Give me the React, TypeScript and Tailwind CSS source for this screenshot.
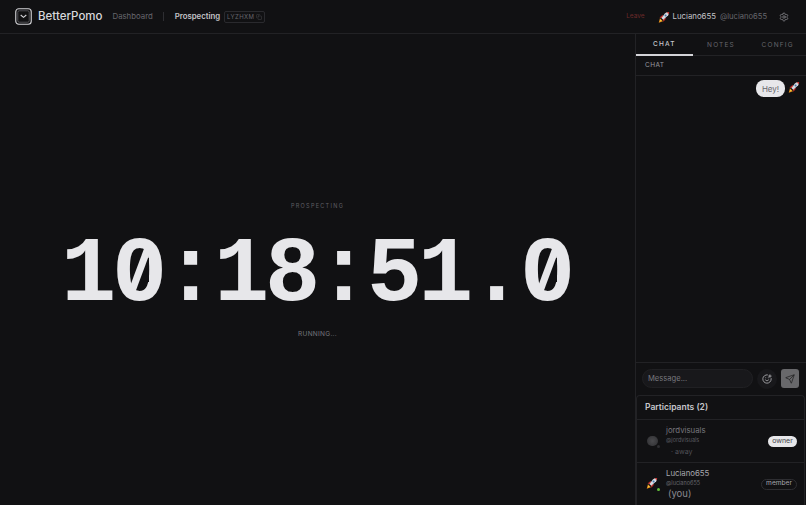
import { Copy, Send, Settings, SmilePlus } from "lucide-react";

const Rocket = ({ size = 14 }: { size?: number }) => (
  <svg width={size} height={size} viewBox="0 0 16 16" className="shrink-0">
    <path d="M1 15.5 L2.6 9.8 L6.6 13.6 Z" fill="#e8901c" />
    <path d="M2.4 14 L3.4 11.2 L5 12.8 Z" fill="#f6dc4c" />
    <path d="M2 8.8 L6.6 5 L6.4 9.8 Z" fill="#c22d29" />
    <path d="M7.4 14.4 L11 9.8 L6.2 10 Z" fill="#c22d29" />
    <path d="M4.6 9.2 L7 11.6 L12.6 6.8 C14.2 5 14.8 3 14.8 1.2 C13 1.2 10.8 1.8 9.2 3.2 Z" fill="#d8dae0" />
    <path d="M11.8 1.8 C12.8 1.4 13.9 1.2 14.8 1.2 C14.8 2.1 14.6 3.2 14.2 4.2 Z" fill="#c22d29" />
    <circle cx="10.1" cy="5.9" r="1.3" fill="#3f78b0" />
  </svg>
);

const SlashedZero = () => (
  <span className="relative inline-block">
    0
    <svg className="absolute left-0 top-0" width="51" height="108" viewBox="0 0 51 108" aria-hidden="true">
      <rect x="19" y="36" width="18" height="24" fill="#111113" />
      <path d="M36 26 L20 69" stroke="#e7e7ea" strokeWidth="7" />
    </svg>
  </span>
);

export default function App() {
  return (
    <div className="h-[505px] w-[806px] overflow-hidden flex flex-col bg-[#111113] font-['Inter','Liberation_Sans',sans-serif] text-[#e4e4e7]">
      <header className="h-[34px] shrink-0 border-b border-[#222225] flex items-center pl-[15px] pr-[17px]">
        <svg width="17" height="17" viewBox="0 0 17 17" fill="none" className="shrink-0">
          <rect x="0.75" y="0.75" width="15.5" height="15.5" rx="3" stroke="#d4d4d8" strokeWidth="1.1" />
          <rect x="2.8" y="2.8" width="11.4" height="11.4" rx="1.5" stroke="#77777c" strokeWidth="0.6" />
          <path d="M5.7 7 L8.5 9.4 L11.3 7" stroke="#d4d4d8" strokeWidth="1.1" />
        </svg>
        <span className="ml-[6px] text-[11.5px] font-medium text-[#d8d8dc]">BetterPomo</span>
        <span className="ml-[10px] text-[7.8px] text-[#66666c]">Dashboard</span>
        <span className="ml-[10px] h-[9px] w-px bg-[#2e2e32]" />
        <span className="ml-[11px] text-[7.8px] font-semibold text-[#c4c4c8]">Prospecting</span>
        <span className="ml-[4px] h-[12px] w-[41px] rounded-[2px] border border-[#2a2a2e] flex items-center justify-center gap-[2px] text-[6px] tracking-[0.4px] text-[#66666c]">
          LYZHXM
          <Copy size={6} strokeWidth={1.5} className="text-[#55555a]" />
        </span>
        <span className="ml-auto text-[6.5px] text-[#6b2a2a]">Leave</span>
        <span className="ml-[13px]"><Rocket size={12} /></span>
        <span className="ml-[3px] text-[7.8px] text-[#c4c4c8]">Luciano655</span>
        <span className="ml-[4px] text-[7.6px] text-[#66666c]">@luciano655</span>
        <Settings size={10} strokeWidth={1.8} className="ml-[12px] text-[#8a8a90]" />
      </header>
      <div className="flex-1 flex min-h-0">
        <main className="flex-1 flex flex-col items-center min-w-0">
          <div className="mt-[168px] text-[5.5px] tracking-[1.3px] text-[#5f5f65] leading-[8px]">PROSPECTING</div>
          <div className="mt-[12px] -ml-[3px] h-[108px] font-['Liberation_Mono',monospace] font-bold text-[92px] leading-[108px] tracking-[-4.2px] text-[#e7e7ea] whitespace-nowrap">1<SlashedZero />:18:51.<SlashedZero /></div>
          <div className="-mt-px text-[6.5px] tracking-[0.3px] text-[#77777d] leading-[10px]">RUNNING...</div>
        </main>
        <aside className="w-[171px] shrink-0 border-l border-[#222225] flex flex-col">
          <div className="h-[22px] shrink-0 flex border-b border-[#222225] text-[6.5px] tracking-[1.2px]">
            <div className="flex-1 flex items-center justify-center pt-[2px] border-b-2 border-[#d4d4d8] -mb-px text-[#c8c8cc] font-medium">CHAT</div>
            <div className="flex-1 flex items-center justify-center pt-[2px] text-[#66666c]">NOTES</div>
            <div className="flex-1 flex items-center justify-center pt-[2px] text-[#66666c]">CONFIG</div>
          </div>
          <div className="h-[20px] shrink-0 border-b border-[#222225] flex items-center pl-[9px] text-[6.5px] tracking-[0.4px] text-[#9a9aa0]">CHAT</div>
          <div className="flex-1 min-h-0 flex justify-end items-start pt-[4px] pr-[6px] gap-[3px]">
            <div className="h-[17px] w-[29px] rounded-[8px] bg-[#e7e7ea] text-[#66666a] text-[8px] flex items-center justify-center">Hey!</div>
            <div className="mt-[1px]"><Rocket size={12} /></div>
          </div>
          <div className="h-[33px] shrink-0 border-t border-[#222225] flex items-center pb-[1px] pl-[6px] pr-[6px]">
            <div className="h-[19px] w-[111px] rounded-full bg-[#18181b] border border-[#202023] pl-[5px] flex items-center text-[7.6px] text-[#77777d]">Message...</div>
            <div className="ml-[4px] h-[20px] w-[20px] rounded-full bg-[#18181b] flex items-center justify-center">
              <SmilePlus size={10} strokeWidth={2} className="text-[#b4b4b8]" />
            </div>
            <div className="ml-[4px] h-[19px] w-[18px] rounded-[3px] bg-[#68686b] flex items-center justify-center">
              <Send size={10} strokeWidth={1.8} className="text-[#202022]" />
            </div>
          </div>
          <section className="h-[110px] shrink-0 rounded-t-[4px] border border-b-0 border-[#222225] mr-px flex flex-col">
            <div className="h-[24px] shrink-0 border-b border-[#222225] flex items-center pl-[8px] text-[8.5px] font-semibold text-[#c8c8cc]">Participants (2)</div>
            <div className="h-[43px] shrink-0 border-b border-[#222225] flex items-center pl-[10px] pr-[7px]">
              <div className="relative h-[13px] w-[13px] shrink-0">
                <div className="absolute left-0 top-[1px] h-[10px] w-[11px] rounded-full bg-[radial-gradient(circle,#4a4a4d,#2e2e31)]" />
                <div className="absolute right-0 bottom-0 h-[3px] w-[3px] rounded-full bg-[#2e2e31]" />
              </div>
              <div className="ml-[6px] flex flex-col -mt-[1px]">
                <span className="text-[7.8px] leading-[12px] text-[#77777d]">jordvisuals</span>
                <span className="text-[5.5px] leading-[8px] text-[#5a5a60]">@jordvisuals</span>
                <span className="mt-[3px] pl-[5px] text-[7px] leading-[10px] text-[#505056]">· away</span>
              </div>
              <div className="ml-auto h-[11px] w-[29px] rounded-full bg-[#e7e7ea] text-[#444448] text-[7px] flex items-center justify-center">owner</div>
            </div>
            <div className="flex-1 flex items-center pl-[9px] pr-[7px]">
              <div className="relative h-[14px] w-[14px] shrink-0">
                <Rocket size={12} />
                <div className="absolute right-0 bottom-0 h-[3px] w-[3px] rounded-full bg-[#65c23a]" />
              </div>
              <div className="ml-[6px] flex flex-col -mt-[1px]">
                <span className="text-[7.8px] leading-[12px] text-[#a8a8ae]">Luciano655</span>
                <span className="text-[5.5px] leading-[8px] text-[#66666c]">@luciano655</span>
                <span className="mt-[1px] pl-[2px] text-[9.5px] leading-[12px] text-[#8a8a90]">(you)</span>
              </div>
              <div className="ml-auto h-[11px] w-[36px] rounded-full border border-[#2e2e32] text-[#a8a8ae] text-[6.6px] flex items-center justify-center">member</div>
            </div>
          </section>
        </aside>
      </div>
    </div>
  );
}
